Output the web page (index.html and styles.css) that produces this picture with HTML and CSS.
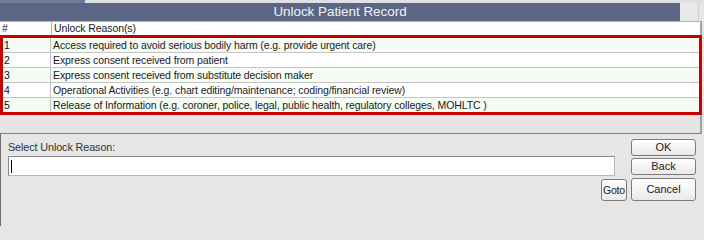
FILE: index.html
```html
<!DOCTYPE html>
<html>
<head>
<meta charset="utf-8">
<link rel="stylesheet" href="styles.css">
</head>
<body>
<div class="top-strip"><div class="tab"></div><div class="rest"></div></div>
<div class="title-row">
  <div class="title-bar">Unlock Patient Record</div>
  <div class="title-side"></div>
</div>
<div class="table-panel">
  <div class="hdr">
    <div class="c-num">#</div>
    <div class="c-reason">Unlock Reason(s)</div>
  </div>
  <div class="redbox">
    <div class="row alt"><div class="c-num">1</div><div class="c-reason">Access required to avoid serious bodily harm (e.g. provide urgent care)</div></div>
    <div class="row"><div class="c-num">2</div><div class="c-reason">Express consent received from patient</div></div>
    <div class="row alt"><div class="c-num">3</div><div class="c-reason">Express consent received from substitute decision maker</div></div>
    <div class="row"><div class="c-num">4</div><div class="c-reason">Operational Activities (e.g. chart editing/maintenance; coding/financial review)</div></div>
    <div class="row alt last"><div class="c-num">5</div><div class="c-reason">Release of Information (e.g. coroner, police, legal, public health, regulatory colleges, MOHLTC )</div></div>
  </div>
  <div class="filler"></div>
</div>
<div class="bottom">
  <div class="label">Select Unlock Reason:</div>
  <div class="btn ok">OK</div>
  <div class="input"><span class="caret"></span></div>
  <div class="btn back">Back</div>
  <div class="btn goto">Goto</div>
  <div class="btn cancel">Cancel</div>
</div>
</body>
</html>
```

FILE: styles.css
```css
html, body {
  margin: 0;
  padding: 0;
}
body {
  width: 704px;
  height: 226px;
  overflow: hidden;
  background: #e6e6e6;
  font-family: "Liberation Sans", Arial, sans-serif;
  font-size: 10.5px;
  letter-spacing: -0.1px;
  color: #1a1a1a;
}
.top-strip {
  display: flex;
  height: 3px;
}
.top-strip .tab {
  width: 85px;
  background: #6f7b98;
}
.top-strip .rest {
  flex: 1;
  background: #dfe1e7;
}
.title-row {
  display: flex;
  height: 18px;
}
.title-bar {
  width: 680px;
  background: #5a6684;
  color: #f2f3f6;
  font-size: 13.4px;
  letter-spacing: 0;
  line-height: 17px;
  text-align: center;
}
.title-side {
  flex: 1;
  background: #e8e8e8;
  border-right: 1px solid #cfcfcf;
  margin-right: 5px;
}
.table-panel {
  width: 702px;
}
.hdr {
  display: flex;
  height: 13px;
  line-height: 13px;
  background: #ffffff;
  border-top: 1px solid #b4b4b4;
  border-right: 2px solid #a2a2a2;
}
.hdr .c-num {
  width: 49px;
  padding-left: 2px;
  border-right: 1px solid #b4b4b4;
}
.hdr .c-reason {
  padding-left: 2px;
}
.redbox {
  border: 3px solid #c80000;
}
.row {
  display: flex;
  height: 14px;
  line-height: 14px;
  background: #ffffff;
  border-bottom: 1px solid #c4c4c4;
}
.row.alt {
  background: #f5fcf4;
}
.row.last {
  border-bottom: none;
}
.row .c-num {
  width: 46px;
  padding-left: 1px;
  color: #111;
  border-right: 1px solid #c4c4c4;
}
.row .c-reason {
  padding-left: 2px;
}
.filler {
  height: 18px;
  background: #e4e4e4;
  border-right: 2px solid #a2a2a2;
  border-bottom: 1px solid #7e7e7e;
}
.bottom {
  display: grid;
  grid-template-columns: 592px 14px 12px 4px 65px;
  grid-template-rows: 17px 20px 25px;
  padding: 5px 0 0 8px;
  height: 92px;
  border-left: 1px solid #6e6e6e;
  box-sizing: border-box;
}
.label {
  grid-column: 1 / 4;
  grid-row: 1;
  color: #333;
  font-size: 10.8px;
  line-height: 13px;
  padding-top: 2px;
  margin-left: -1px;
}
.input {
  grid-column: 1 / 3;
  grid-row: 2;
  background: #ffffff;
  border: 1px solid #8a8a8a;
  border-bottom-color: #b8b8b8;
  border-right-color: #b8b8b8;
  margin-left: -1px;
}
.caret {
  display: block;
  width: 1px;
  height: 13px;
  background: #000;
  margin: 3px 0 0 2px;
}
.btn {
  box-sizing: border-box;
  border: 1px solid #7c7c7c;
  border-radius: 3px;
  background: linear-gradient(#ffffff, #e9e9e9);
  color: #222;
  text-align: center;
  font-size: 11px;
  letter-spacing: 0;
}
.ok {
  grid-column: 5;
  grid-row: 1;
  height: 17px;
  line-height: 15px;
}
.back {
  grid-column: 5;
  grid-row: 2;
  margin-top: 2px;
  height: 17px;
  line-height: 15px;
}
.cancel {
  grid-column: 5;
  grid-row: 3;
  margin-top: 2px;
  height: 23px;
  line-height: 21px;
}
.goto {
  grid-column: 2 / 4;
  grid-row: 3;
  margin-top: 3px;
  height: 22px;
  line-height: 20px;
  font-size: 10.5px;
  letter-spacing: -0.2px;
}
```
